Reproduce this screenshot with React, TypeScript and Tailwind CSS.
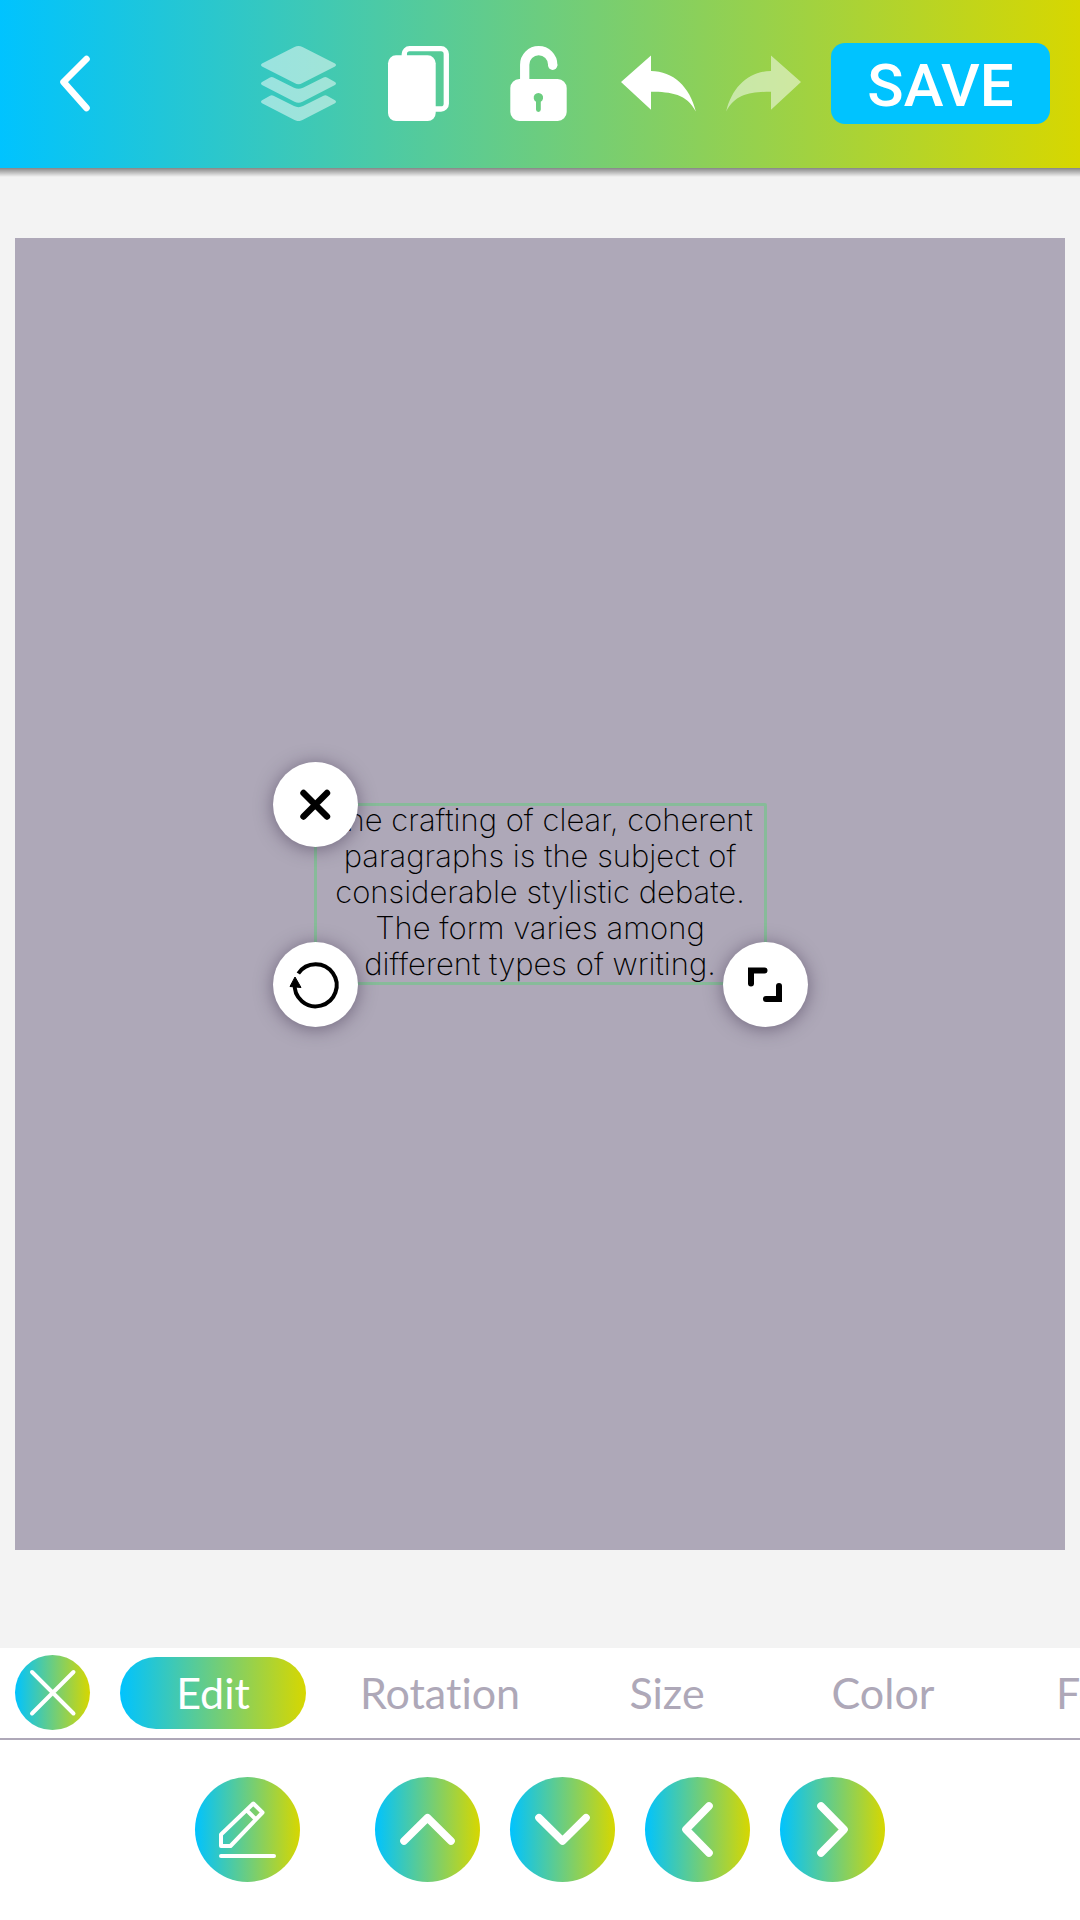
import React from "react";

const GRADIENT = "bg-linear-to-r/srgb from-[#00c3ff] to-[#d7d700]";
const ICON = "block size-[75px]";

function IconButton({ label, className = "", children }: { label: string; className?: string; children: React.ReactNode }) {
  return (
    <button type="button" aria-label={label} className={`shrink-0 ${className}`}>
      {children}
    </button>
  );
}

function BackIcon() {
  return (
    <svg className={ICON} viewBox="0 0 75 75" fill="none" stroke="white" strokeWidth="6.6" strokeLinecap="round" strokeLinejoin="round">
      <path d="M49.5 13 L26.5 36 L49.5 62" />
    </svg>
  );
}

function LayersIcon() {
  const band =
    "M9 31.5 Q10.7 30.5 12.5 31.5 L33 41.7 Q37.5 44 42 41.7 L62.5 31.5 Q64.3 30.5 66 31.5 L74 36 Q76 37.3 74 39 L41.5 55.8 Q37.5 57.8 33.5 55.8 L1 39 Q-1 37.3 1 36Z";
  return (
    <svg className={ICON} viewBox="0 0 75 75" fill="white" opacity="0.5">
      <path d="M33.5 1 Q37.5 -1 41.5 1 L74 17.5 Q76 19 74 20.5 L41.5 37 Q37.5 39.5 33.5 37 L1 20.5 Q-1 19 1 17.5Z" />
      <path d={band} />
      <path d={band} transform="translate(0 18.3)" />
    </svg>
  );
}

function CopyIcon() {
  return (
    <svg className={ICON} viewBox="0 0 75 75">
      <rect x="7" y="9.3" width="47.7" height="65.7" rx="8" fill="white" />
      <path d="M23.3 11 V8 a5.3 5.3 0 0 1 5.3 -5.3 H60 a5.3 5.3 0 0 1 5.3 5.3 V57.7 a5.3 5.3 0 0 1 -5.3 5.3 H53" fill="none" stroke="white" strokeWidth="5.3" />
    </svg>
  );
}

function UnlockIcon() {
  return (
    <svg className={ICON} viewBox="0 0 75 75">
      <path d="M23.7 35 V18.7 a14 14 0 0 1 28 0 V19.3" fill="none" stroke="white" strokeWidth="9.3" />
      <circle cx="51.7" cy="19.3" r="4.65" fill="white" />
      <path
        fill="white"
        fillRule="evenodd"
        d="M18.3 33 H56.7 a9 9 0 0 1 9 9 V66 a9 9 0 0 1 -9 9 H18.3 a9 9 0 0 1 -9 -9 V42 a9 9 0 0 1 9 -9Z M35 55.7 a4.7 4.7 0 1 1 4.8 0 V63.5 a2.4 2.4 0 0 1 -4.8 0Z"
      />
    </svg>
  );
}

function ArrowIcon({ forward = false }: { forward?: boolean }) {
  return (
    <svg className={ICON} viewBox="0 0 75 75" fill="white" opacity={forward ? 0.5 : 1}>
      <path
        d="M0 36 L30 9.5 V25 C52 25 69 41 74.8 65.5 C66 48 50 45.7 30 45.7 V63.7Z"
        transform={forward ? "translate(75 0) scale(-1 1)" : undefined}
      />
    </svg>
  );
}

function Handle({ label, className, children }: { label: string; className: string; children: React.ReactNode }) {
  return (
    <button
      type="button"
      aria-label={label}
      className={`absolute size-[85px] rounded-full bg-white shadow-[0_2px_18px_rgba(50,35,65,0.5)] ${className}`}
    >
      <svg className="block size-full" viewBox="0 0 85 85" fill="none" stroke="black">
        {children}
      </svg>
    </button>
  );
}

function RoundButton({ label, d }: { label: string; d: string }) {
  return (
    <button type="button" aria-label={label} className={`size-[105px] shrink-0 rounded-full ${GRADIENT}`}>
      <svg className="block size-full" viewBox="0 0 105 105" fill="none" stroke="white" strokeWidth="7.6" strokeLinecap="round" strokeLinejoin="round">
        <path d={d} />
      </svg>
    </button>
  );
}

const LINES = [
  "The crafting of clear, coherent",
  "paragraphs is the subject of",
  "considerable stylistic debate.",
  "The form varies among",
  "different types of writing.",
];

const TABS = [
  { name: "Rotation", width: "w-[268px]" },
  { name: "Size", width: "w-[186px]" },
  { name: "Color", width: "w-[246px]" },
  { name: "Font", width: "w-[186px]" },
];

export default function App() {
  return (
    <div className="flex min-h-screen flex-col overflow-x-hidden bg-[#f3f3f3]">
      <header className={`relative flex h-[168px] items-center pr-[30px] pb-px pl-[37px] ${GRADIENT}`}>
        <IconButton label="Back" className="mr-auto">
          <BackIcon />
        </IconButton>
        <div className="flex items-center gap-[45px]">
          <IconButton label="Layers"><LayersIcon /></IconButton>
          <IconButton label="Duplicate"><CopyIcon /></IconButton>
          <IconButton label="Lock"><UnlockIcon /></IconButton>
          <div className="flex items-center gap-[30px]">
            <IconButton label="Undo"><ArrowIcon /></IconButton>
            <IconButton label="Redo"><ArrowIcon forward /></IconButton>
            <button
              type="button"
              className="h-[81px] w-[219px] rounded-[14px] bg-[#00c3ff] pt-1 text-center font-['Roboto',sans-serif] text-[60px] leading-[77px] font-medium text-white"
            >
              SAVE
            </button>
          </div>
        </div>
        <div className="absolute inset-x-0 top-full h-[9px] bg-linear-to-b from-black/45 to-transparent" />
      </header>

      <main className="flex-1 px-[15px] pt-[70px] pb-[98px]">
        <div className="flex aspect-[1050/1312] w-full items-center justify-center bg-[#aea8b8]">
          <div className="relative w-[453px] pb-1">
            <div className="absolute inset-x-0 inset-y-px rounded-[2px] border-3 border-[#87bb99]" />
            <p className="relative text-center font-['Inter',sans-serif] text-[31px] leading-[36px] font-extralight whitespace-nowrap text-black">
              {LINES.map((line) => (
                <span key={line} className="block">{line}</span>
              ))}
            </p>
            <Handle label="Delete" className="-top-[40px] -left-[41px]">
              <path d="M30.5 31 L54 54.5 M54 31 L30.5 54.5" strokeWidth="6.4" strokeLinecap="round" />
            </Handle>
            <Handle label="Rotate" className="-bottom-[41px] -left-[41px]">
              <path d="M25.3 31.5 A21 21 0 1 1 21.8 41" strokeWidth="4" />
              <path d="M22 35 L28 45.5 L17 44.5Z" fill="black" />
            </Handle>
            <Handle label="Resize" className="-right-[41px] -bottom-[41px]">
              <path d="M28 41.5 V28.5 H41.5 M56 44 V57 H43" strokeWidth="6" strokeLinecap="round" />
            </Handle>
          </div>
        </div>
      </main>

      <footer className="bg-white">
        <nav aria-label="Text tools" className="flex h-[92px] items-center overflow-hidden border-b-2 border-[#aea8b8] pl-[15px]">
          <IconButton label="Close" className={`mr-[30px] mb-px size-[75px] rounded-full ${GRADIENT}`}>
            <svg className="block size-full" viewBox="0 0 75 75" stroke="white" strokeWidth="4" strokeLinecap="round">
              <path d="M17 17 L58.5 58.5 M58.5 17 L17 58.5" />
            </svg>
          </IconButton>
          <div className="flex items-center font-['Lato',sans-serif] text-[43px] leading-[72px] text-[#aea8b8] [font-variant-ligatures:none]">
            <button type="button" aria-current="true" className={`h-[72px] w-[186px] shrink-0 rounded-full text-center text-white ${GRADIENT}`}>
              Edit
            </button>
            {TABS.map((tab) => (
              <button key={tab.name} type="button" className={`h-[72px] shrink-0 text-center ${tab.width}`}>
                {tab.name}
              </button>
            ))}
          </div>
        </nav>
        <div className="flex justify-center gap-[30px] pt-[37px] pb-[38px]">
          <button type="button" aria-label="Edit text" className={`mr-[45px] size-[105px] shrink-0 rounded-full ${GRADIENT}`}>
            <svg className="block size-full" viewBox="0 0 105 105" fill="none" stroke="white" strokeWidth="4">
              <path d="M26 69 V57.5 L58.3 26.5 L67.5 35.5 L35.5 69Z M51.5 33 L60.5 42" strokeLinejoin="round" />
              <path d="M26 79 H79" strokeLinecap="round" />
            </svg>
          </button>
          <RoundButton label="Move up" d="M29 64 L52.5 40.7 L76 64" />
          <RoundButton label="Move down" d="M29 40.7 L52.5 64 L76 40.7" />
          <RoundButton label="Move left" d="M64 29 L41 52.5 L64 76" />
          <RoundButton label="Move right" d="M41 29 L64 52.5 L41 76" />
        </div>
      </footer>
    </div>
  );
}
